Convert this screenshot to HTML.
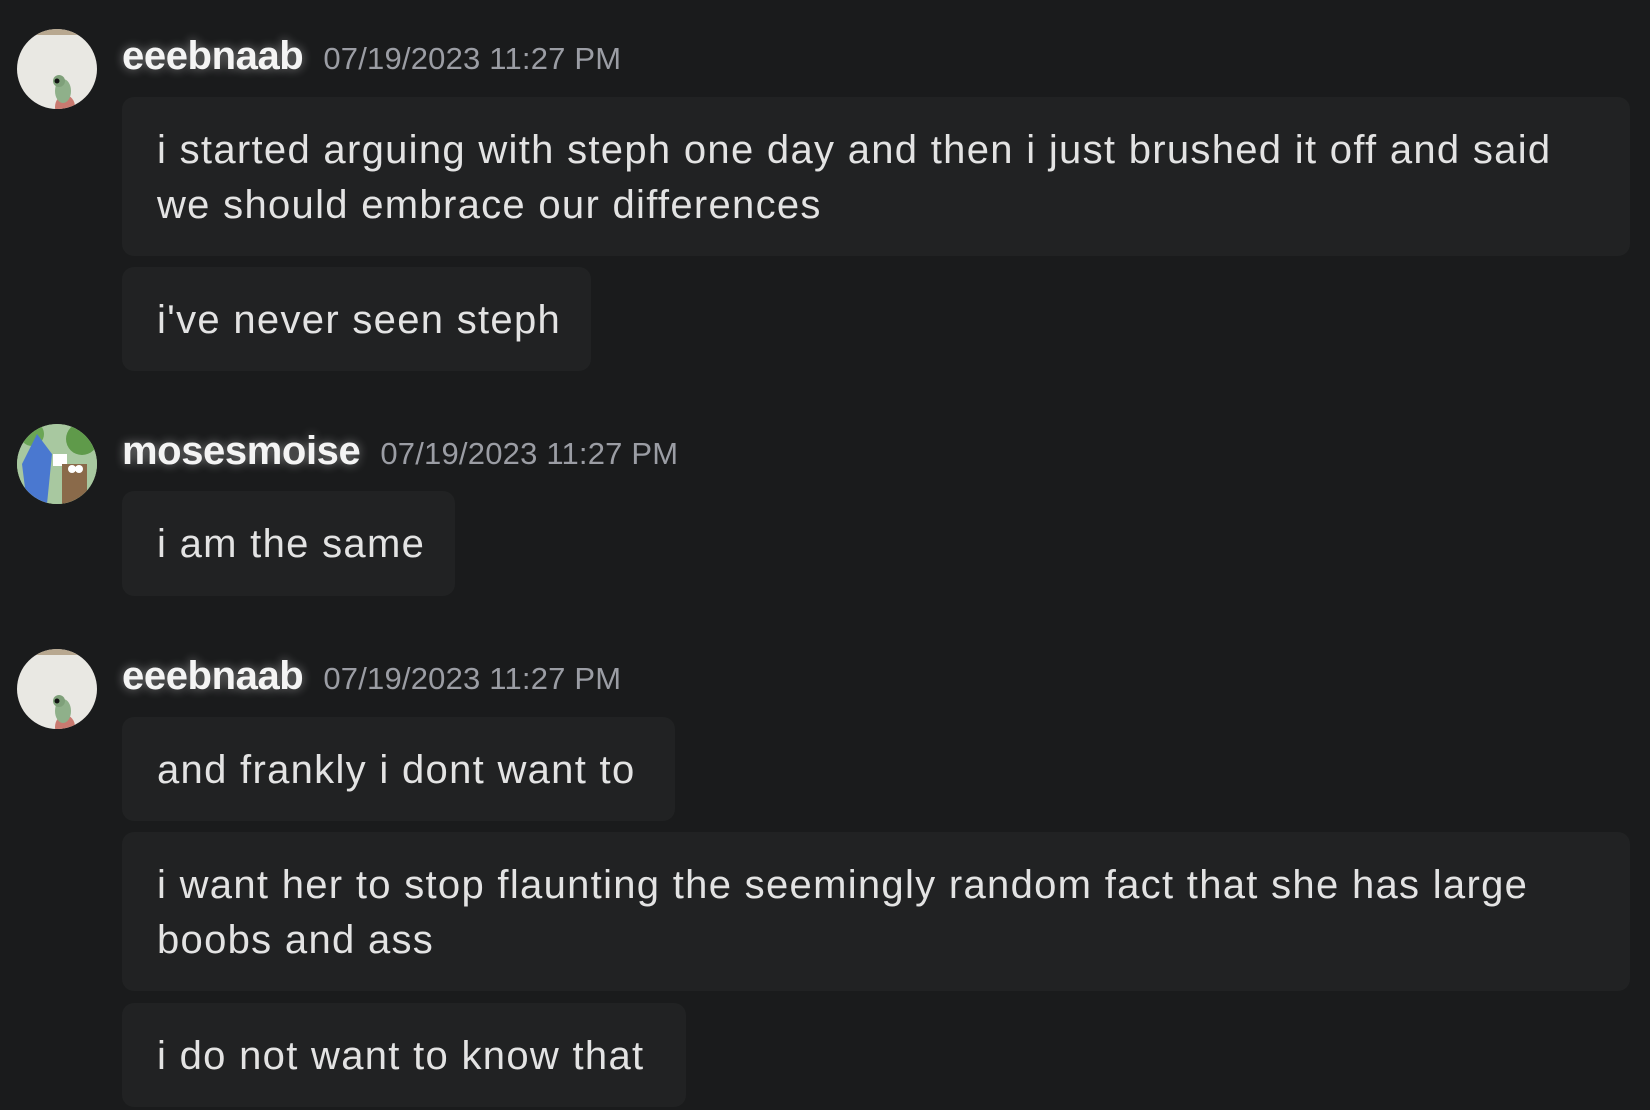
<!DOCTYPE html>
<html><head><meta charset="utf-8"><style>
html,body{margin:0;padding:0;background:#1a1b1c;width:1650px;height:1110px;overflow:hidden;font-family:"Liberation Sans",sans-serif;}
.av{position:absolute;left:17px;width:80px;height:80px;border-radius:50%;overflow:hidden}
.frog{background:#e9e8e3}
.hdr{position:absolute;left:122px;white-space:nowrap}
.name{color:#f4f4f4;font-size:40px;font-weight:bold;text-shadow:0 0 10px rgba(255,255,255,.45);letter-spacing:-0.4px}
.time{color:#9b9da4;font-size:31px;margin-left:20px;letter-spacing:0.2px}
.b{position:absolute;left:122px;background:#212223;border-radius:12px;color:#e3e3e3;font-size:40px;letter-spacing:1.3px;line-height:55px;padding:26px 35px 22px;box-sizing:border-box;white-space:nowrap}
</style></head><body>

<div class="av frog" style="top:29px">
<svg width="80" height="80"><rect width="80" height="6" fill="#b8a890"/><ellipse cx="48" cy="78" rx="10" ry="12" fill="#c97a70"/><ellipse cx="46" cy="62" rx="8" ry="12" fill="#8fb08a"/><circle cx="42" cy="52" r="6" fill="#7fa07a"/><circle cx="40" cy="52" r="2.5" fill="#111"/></svg>
</div>
<div class="hdr" style="top:34px"><span class="name">eeebnaab</span><span class="time">07/19/2023 11:27 PM</span></div>
<div class="b" style="top:97px;width:1508px;height:159px">i started arguing with steph one day and then i just brushed it off and said<br>we should embrace our differences</div>
<div class="b" style="top:267px;width:469px;height:104px">i've never seen steph</div>

<div class="av" style="top:424px;background:#9cc08a">
<svg width="80" height="80"><rect width="80" height="80" fill="#a8c8a0"/><circle cx="65" cy="15" r="16" fill="#5f9a4a"/><circle cx="15" cy="10" r="12" fill="#6aa555"/><path d="M20 10 L35 30 L30 80 L10 80 L5 40 Z" fill="#4a78d0"/><rect x="36" y="30" width="14" height="12" fill="#fff"/><path d="M45 40 h25 v40 h-25z" fill="#8a6a4a"/><circle cx="55" cy="45" r="4" fill="#fff"/><circle cx="62" cy="45" r="4" fill="#fff"/></svg>
</div>
<div class="hdr" style="top:429px"><span class="name">mosesmoise</span><span class="time">07/19/2023 11:27 PM</span></div>
<div class="b" style="top:491px;width:333px;height:105px">i am the same</div>

<div class="av frog" style="top:649px">
<svg width="80" height="80"><rect width="80" height="6" fill="#b8a890"/><ellipse cx="48" cy="78" rx="10" ry="12" fill="#c97a70"/><ellipse cx="46" cy="62" rx="8" ry="12" fill="#8fb08a"/><circle cx="42" cy="52" r="6" fill="#7fa07a"/><circle cx="40" cy="52" r="2.5" fill="#111"/></svg>
</div>
<div class="hdr" style="top:654px"><span class="name">eeebnaab</span><span class="time">07/19/2023 11:27 PM</span></div>
<div class="b" style="top:717px;width:553px;height:104px">and frankly i dont want to</div>
<div class="b" style="top:832px;width:1508px;height:159px">i want her to stop flaunting the seemingly random fact that she has large<br>boobs and ass</div>
<div class="b" style="top:1003px;width:564px;height:104px">i do not want to know that</div>

</body></html>
